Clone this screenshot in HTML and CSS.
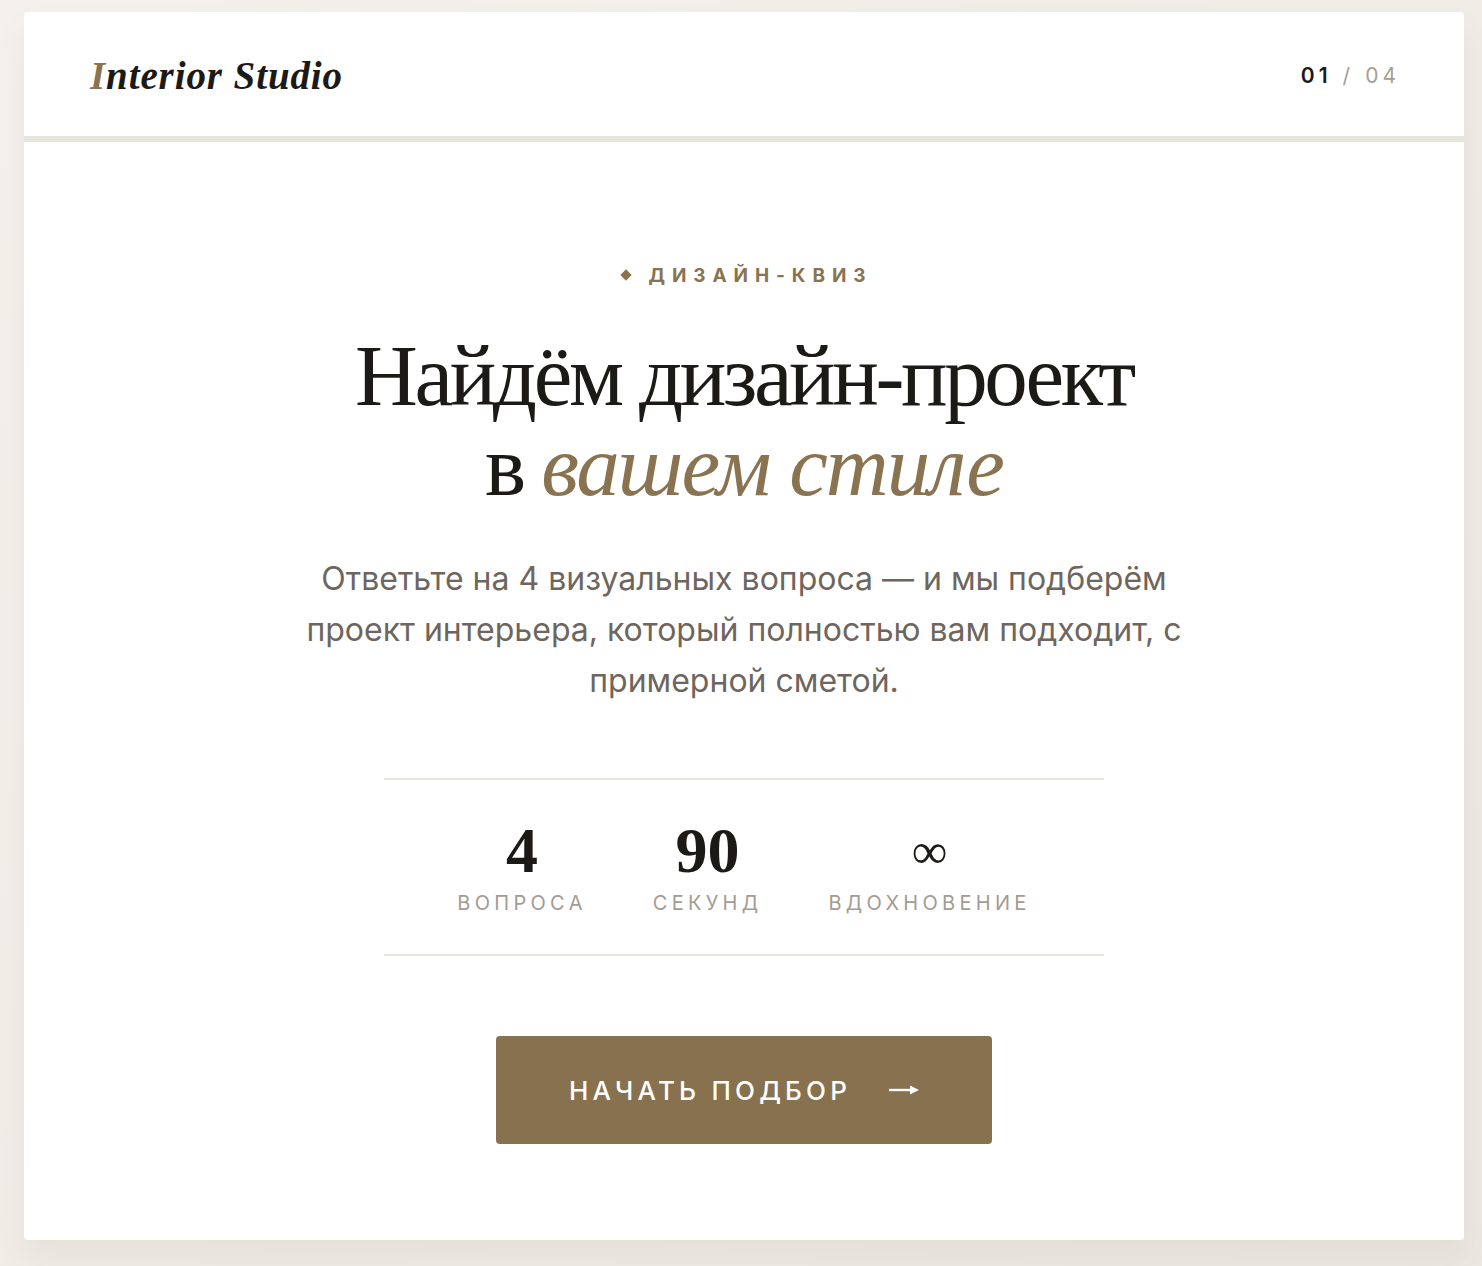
FILE: index.html
```html
<!DOCTYPE html>
<html lang="ru">
<head>
<meta charset="utf-8">
<title>Interior Studio — дизайн-квиз</title>
<link rel="stylesheet" href="styles.css">
</head>
<body>
<div class="page">
  <div class="card">
    <header class="header">
      <div class="logo"><span class="logo-i">I</span>nterior Studio</div>
      <div class="counter"><span class="counter-cur">01</span><span class="counter-sep">/</span><span class="counter-total">04</span></div>
    </header>
    <main class="intro">
      <div class="eyebrow"><span class="diamond"></span><span>ДИЗАЙН-КВИЗ</span></div>
      <h1 class="title">Найдём дизайн-проект<br>в <em class="accent">вашем стиле</em></h1>
      <p class="lead">Ответьте на 4 визуальных вопроса — и мы подберём проект интерьера, который полностью вам подходит, с примерной сметой.</p>
      <div class="stats">
        <div class="stat"><div class="stat-num">4</div><div class="stat-label">ВОПРОСА</div></div>
        <div class="stat"><div class="stat-num">90</div><div class="stat-label">СЕКУНД</div></div>
        <div class="stat"><div class="stat-num stat-inf">∞</div><div class="stat-label">ВДОХНОВЕНИЕ</div></div>
      </div>
      <button class="cta" type="button"><span>НАЧАТЬ ПОДБОР</span><svg class="cta-arrow" width="30" height="14" viewBox="0 0 30 14" aria-hidden="true"><line x1="0" y1="7" x2="24" y2="7" stroke="#ffffff" stroke-width="2.4"/><path d="M21 2.5 L30 7 L21 11.5 Z" fill="#ffffff"/></svg></button>
    </main>
  </div>
</div>
</body>
</html>
```

FILE: styles.css
```css
html, body {
  margin: 0;
  padding: 0;
}
body {
  background: linear-gradient(135deg, #f4f1ec 0%, #efebe5 60%, #ebe7e1 100%);
  font-family: "Inter", "Noto Sans", sans-serif;
  min-height: 1266px;
}
.page {
  padding: 12px 18px 26px 24px;
}
.card {
  background: #ffffff;
  border-radius: 4px;
  height: 1228px;
  box-shadow: 0 18px 30px rgba(120, 105, 85, 0.08);
  display: flex;
  flex-direction: column;
}
.header {
  height: 124px;
  border-bottom: 6px solid #e8e4de;
  display: flex;
  align-items: center;
  justify-content: space-between;
  padding: 0 64px 0 66px;
}
.logo {
  font-family: "Liberation Serif", "Times New Roman", serif;
  font-style: italic;
  font-weight: 700;
  font-size: 39px;
  color: #1c1a17;
  letter-spacing: 0.9px;
  padding-top: 2px;
}
.logo-i {
  color: #8a7350;
}
.counter {
  font-size: 21px;
  letter-spacing: 4px;
  display: flex;
  gap: 11px;
  padding-top: 2px;
}
.counter-cur {
  font-weight: 600;
  color: #1c1a17;
}
.counter-sep, .counter-total {
  color: #a59e96;
  font-weight: 400;
}
.intro {
  display: flex;
  flex-direction: column;
  align-items: center;
  padding-top: 119px;
}
.eyebrow {
  display: flex;
  align-items: center;
  gap: 19px;
  color: #8a7350;
  font-weight: 700;
  font-size: 19px;
  letter-spacing: 6.9px;
  height: 28px;
  padding-left: 6px;
}
.diamond {
  width: 8px;
  height: 8px;
  background: #8a7350;
  transform: rotate(45deg);
}
.title {
  margin: 42px 0 0;
  font-family: "Liberation Serif", "Times New Roman", serif;
  font-weight: 400;
  font-size: 87px;
  line-height: 90px;
  letter-spacing: -3.4px;
  color: #1c1a17;
  text-align: center;
}
.accent {
  font-style: italic;
  color: #8a7350;
  letter-spacing: -2px;
}
.lead {
  margin: 42px 0 0;
  max-width: 900px;
  font-size: 32px;
  line-height: 51px;
  color: #6e665e;
  text-align: center;
}
.stats {
  margin-top: 72px;
  width: 720px;
  border-top: 2px solid #e8e4de;
  border-bottom: 2px solid #e8e4de;
  display: flex;
  justify-content: center;
  gap: 66px;
  padding: 38px 0 39px;
}
.stat {
  display: flex;
  flex-direction: column;
  align-items: center;
}
.stat-num {
  font-family: "Liberation Serif", "Times New Roman", serif;
  font-weight: 700;
  font-size: 64px;
  line-height: 66px;
  color: #1c1a17;
}
.stat-inf {
  font-weight: 400;
  font-size: 50px;
}
.stat-label {
  margin-top: 7px;
  font-size: 20px;
  line-height: 24px;
  letter-spacing: 4.3px;
  color: #a39c93;
}
.cta {
  margin-top: 80px;
  width: 496px;
  height: 108px;
  border: none;
  border-radius: 4px;
  background: #88714e;
  color: #ffffff;
  font-family: "Inter", "Noto Sans", sans-serif;
  font-size: 26px;
  font-weight: 500;
  letter-spacing: 4.2px;
  display: flex;
  align-items: center;
  justify-content: center;
  gap: 38px;
  padding: 0;
  cursor: pointer;
}
.cta-arrow {
  display: block;
}
```
